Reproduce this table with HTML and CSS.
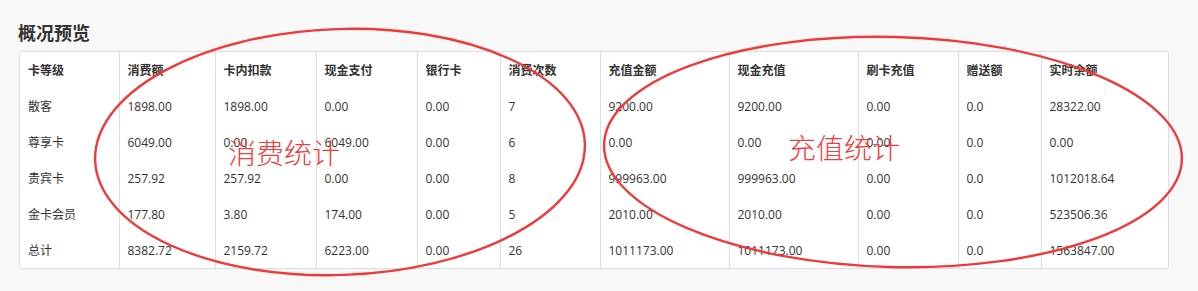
FILE: index.html
```html
<!DOCTYPE html>
<html lang="zh-CN">
<head>
<meta charset="utf-8">
<title>概况预览</title>
<link rel="stylesheet" href="styles.css">
</head>
<body>
<div class="page">
  <h2 class="title">概况预览</h2>
  <div class="card">
    <table class="stats">
      <thead>
        <tr>
          <th>卡等级</th><th>消费额</th><th>卡内扣款</th><th>现金支付</th><th>银行卡</th><th>消费次数</th><th>充值金额</th><th>现金充值</th><th>刷卡充值</th><th>赠送额</th><th>实时余额</th>
        </tr>
      </thead>
      <tbody>
        <tr><td>散客</td><td>1898.00</td><td>1898.00</td><td>0.00</td><td>0.00</td><td>7</td><td>9200.00</td><td>9200.00</td><td>0.00</td><td>0.0</td><td>28322.00</td></tr>
        <tr><td>尊享卡</td><td>6049.00</td><td>0.00</td><td>6049.00</td><td>0.00</td><td>6</td><td>0.00</td><td>0.00</td><td>0.00</td><td>0.0</td><td>0.00</td></tr>
        <tr><td>贵宾卡</td><td>257.92</td><td>257.92</td><td>0.00</td><td>0.00</td><td>8</td><td>999963.00</td><td>999963.00</td><td>0.00</td><td>0.0</td><td>1012018.64</td></tr>
        <tr><td>金卡会员</td><td>177.80</td><td>3.80</td><td>174.00</td><td>0.00</td><td>5</td><td>2010.00</td><td>2010.00</td><td>0.00</td><td>0.0</td><td>523506.36</td></tr>
        <tr><td>总计</td><td>8382.72</td><td>2159.72</td><td>6223.00</td><td>0.00</td><td>26</td><td>1011173.00</td><td>1011173.00</td><td>0.00</td><td>0.0</td><td>1563847.00</td></tr>
      </tbody>
    </table>
  </div>
  <svg class="marks" width="1198" height="291" viewBox="0 0 1198 291">
    <ellipse cx="340" cy="152" rx="245" ry="123" transform="rotate(-2 340 152)"/>
    <ellipse cx="893" cy="152" rx="289" ry="115" transform="rotate(1.5 893 152)"/>
    <text x="228" y="164">消费统计</text>
    <text x="788" y="159">充值统计</text>
  </svg>
</div>
</body>
</html>
```
FILE: styles.css
```css
html, body {
  margin: 0;
  padding: 0;
  background: #f8f8f8;
}
.page {
  position: relative;
  width: 1198px;
  height: 291px;
  box-sizing: border-box;
  padding: 22px 29px 0 19px;
  font-family: "Open Sans", "Noto Sans CJK SC", sans-serif;
  color: #333;
  overflow: hidden;
}
.title {
  margin: 0 0 6px -1px;
  height: 23px;
  line-height: 23px;
  font-size: 18px;
  font-weight: bold;
  color: #333;
}
.card {
  background: #fff;
  border: 1px solid #ddd;
  border-radius: 3px;
  overflow: hidden;
}
.stats {
  border-collapse: collapse;
  table-layout: fixed;
  width: 1148px;
  font-size: 12px;
}
.stats th,
.stats td {
  height: 36px;
  padding: 0 8px;
  text-align: left;
  white-space: nowrap;
  border-left: 1px solid #ddd;
  box-sizing: border-box;
}
.stats th:first-child,
.stats td:first-child {
  border-left: none;
}
.stats th {
  font-weight: bold;
  color: #333;
}
.stats td {
  color: #333;
}
.stats th:nth-child(1) { width: 99px; }
.stats th:nth-child(2) { width: 96px; }
.stats th:nth-child(3) { width: 101px; }
.stats th:nth-child(4) { width: 101px; }
.stats th:nth-child(5) { width: 83px; }
.stats th:nth-child(6) { width: 100px; }
.stats th:nth-child(7) { width: 129px; }
.stats th:nth-child(8) { width: 129px; }
.stats th:nth-child(9) { width: 100px; }
.stats th:nth-child(10) { width: 83px; }
.stats th:nth-child(11) { width: 128px; }
.marks {
  position: absolute;
  left: 0;
  top: 0;
  pointer-events: none;
}
.marks ellipse {
  fill: none;
  stroke: #f03a3a;
  stroke-width: 2.4;
}
.marks text {
  fill: #f33b3b;
  font-family: "Noto Sans CJK SC", sans-serif;
  font-weight: 300;
  font-size: 28px;
}
```
